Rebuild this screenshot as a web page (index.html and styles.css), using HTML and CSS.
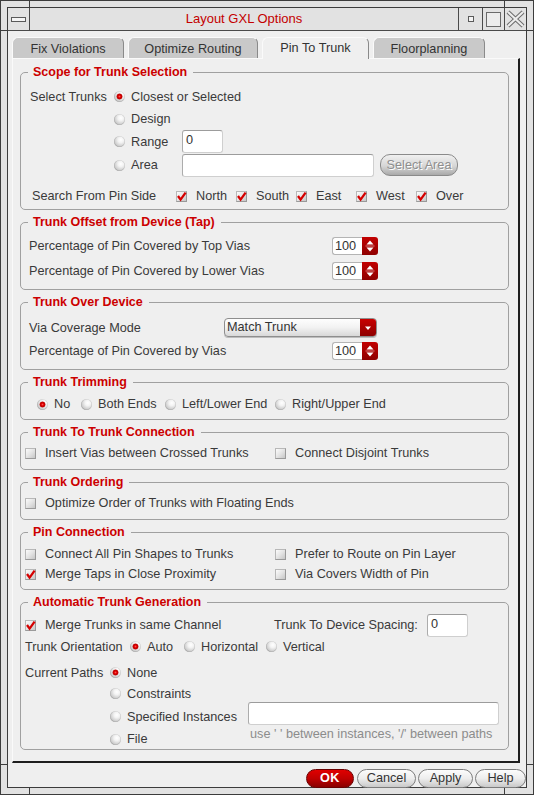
FILE: index.html
```html
<!DOCTYPE html>
<html>
<head>
<meta charset="utf-8">
<title>Layout GXL Options</title>
<link rel="stylesheet" href="styles.css">
</head>
<body>
<div class="window">
  <span class="tick tv tl"></span>
  <span class="tick tv tr"></span>
  <span class="tick tv bl"></span>
  <span class="tick tv br"></span>
  <span class="tick th lt"></span>
  <span class="tick th rt"></span>
  <span class="tick th lb"></span>
  <span class="tick th rb"></span>
  <div class="inner">
    <div class="titlebar">
      <div class="tb-btn tb-menu"><span class="menu-glyph"></span></div>
      <div class="tb-title">Layout GXL Options</div>
      <div class="tb-btn tb-min"><span class="min-glyph"></span></div>
      <div class="tb-btn tb-max"><span class="max-glyph"></span></div>
      <div class="tb-btn tb-close">
        <svg width="19" height="18" viewBox="0 0 19 18"><path d="M2 2 L17 16 M17 2 L2 16" stroke="#6c6c6c" stroke-width="4.2" fill="none"/><path d="M2 2 L17 16 M17 2 L2 16" stroke="#ececec" stroke-width="2.2" fill="none"/></svg>
      </div>
    </div>

    <div class="content">
      <div class="tabs">
        <div class="tab t-fix">Fix Violations</div>
        <div class="tab t-opt">Optimize Routing</div>
        <div class="tab t-pin active">Pin To Trunk</div>
        <div class="tab t-floor">Floorplanning</div>
      </div>

      <div class="panel">
        <fieldset class="group">
          <legend>Scope for Trunk Selection</legend>
          <div class="gbody g-scope">
            <div class="scope">
              <span class="lbl">Select Trunks</span>
              <label class="opt span3"><span class="radio on"></span>Closest or Selected</label>
              <label class="opt c2"><span class="radio"></span>Design</label>
              <label class="opt c2"><span class="radio"></span>Range</label>
              <div class="field f-range">0</div>
              <label class="opt c2"><span class="radio"></span>Area</label>
              <div class="field f-area"></div>
              <div class="pill disabled sel-area">Select Area</div>
            </div>
            <div class="sides">
              <span class="lbl side-lbl">Search From Pin Side</span>
              <label class="cbi w60"><span class="cb"><svg width="11" height="11" viewBox="0 0 11 11"><path d="M2 5 L4.6 8.6 L9.6 1.6" stroke="#d40000" stroke-width="2.3" fill="none"/></svg></span>North</label>
              <label class="cbi w60"><span class="cb"><svg width="11" height="11" viewBox="0 0 11 11"><path d="M2 5 L4.6 8.6 L9.6 1.6" stroke="#d40000" stroke-width="2.3" fill="none"/></svg></span>South</label>
              <label class="cbi w60"><span class="cb"><svg width="11" height="11" viewBox="0 0 11 11"><path d="M2 5 L4.6 8.6 L9.6 1.6" stroke="#d40000" stroke-width="2.3" fill="none"/></svg></span>East</label>
              <label class="cbi w60"><span class="cb"><svg width="11" height="11" viewBox="0 0 11 11"><path d="M2 5 L4.6 8.6 L9.6 1.6" stroke="#d40000" stroke-width="2.3" fill="none"/></svg></span>West</label>
              <label class="cbi"><span class="cb"><svg width="11" height="11" viewBox="0 0 11 11"><path d="M2 5 L4.6 8.6 L9.6 1.6" stroke="#d40000" stroke-width="2.3" fill="none"/></svg></span>Over</label>
            </div>
          </div>
        </fieldset>

        <fieldset class="group">
          <legend>Trunk Offset from Device (Tap)</legend>
          <div class="gbody g-tap">
            <div class="row r25">
              <span class="lbl w303">Percentage of Pin Covered by Top Vias</span>
              <div class="spin"><span class="spin-field">100</span><span class="spin-btn"><svg width="16" height="18" viewBox="0 0 16 18"><path d="M4.5 7.5 L8 3.5 L11.5 7.5Z" fill="#fff"/><path d="M4.5 10.5 L8 14.5 L11.5 10.5Z" fill="#fff"/><path d="M3.5 9 H12.5" stroke="#d98080" stroke-width="1"/></svg></span></div>
            </div>
            <div class="row r25">
              <span class="lbl w303">Percentage of Pin Covered by Lower Vias</span>
              <div class="spin"><span class="spin-field">100</span><span class="spin-btn"><svg width="16" height="18" viewBox="0 0 16 18"><path d="M4.5 7.5 L8 3.5 L11.5 7.5Z" fill="#fff"/><path d="M4.5 10.5 L8 14.5 L11.5 10.5Z" fill="#fff"/><path d="M3.5 9 H12.5" stroke="#d98080" stroke-width="1"/></svg></span></div>
            </div>
          </div>
        </fieldset>

        <fieldset class="group">
          <legend>Trunk Over Device</legend>
          <div class="gbody g-over">
            <div class="row r23">
              <span class="lbl w195">Via Coverage Mode</span>
              <div class="combo"><span class="combo-text">Match Trunk</span><span class="combo-btn"><svg width="16" height="18" viewBox="0 0 16 18"><path d="M5 7.5 L11 7.5 L8 11Z" fill="#fff"/></svg></span></div>
            </div>
            <div class="row r24">
              <span class="lbl w303">Percentage of Pin Covered by Vias</span>
              <div class="spin"><span class="spin-field">100</span><span class="spin-btn"><svg width="16" height="18" viewBox="0 0 16 18"><path d="M4.5 7.5 L8 3.5 L11.5 7.5Z" fill="#fff"/><path d="M4.5 10.5 L8 14.5 L11.5 10.5Z" fill="#fff"/><path d="M3.5 9 H12.5" stroke="#d98080" stroke-width="1"/></svg></span></div>
            </div>
          </div>
        </fieldset>

        <fieldset class="group">
          <legend>Trunk Trimming</legend>
          <div class="gbody g-trim">
            <div class="trim">
              <label class="opt"><span class="radio on"></span>No</label>
              <label class="opt"><span class="radio"></span>Both Ends</label>
              <label class="opt"><span class="radio"></span>Left/Lower End</label>
              <label class="opt"><span class="radio"></span>Right/Upper End</label>
            </div>
          </div>
        </fieldset>

        <fieldset class="group">
          <legend>Trunk To Trunk Connection</legend>
          <div class="gbody g-chk">
            <div class="two">
              <label class="cbi"><span class="cb"></span>Insert Vias between Crossed Trunks</label>
              <label class="cbi"><span class="cb"></span>Connect Disjoint Trunks</label>
            </div>
          </div>
        </fieldset>

        <fieldset class="group">
          <legend>Trunk Ordering</legend>
          <div class="gbody g-chk">
            <div class="two">
              <label class="cbi"><span class="cb"></span>Optimize Order of Trunks with Floating Ends</label>
            </div>
          </div>
        </fieldset>

        <fieldset class="group">
          <legend>Pin Connection</legend>
          <div class="gbody g-pin">
            <div class="two">
              <label class="cbi"><span class="cb"></span>Connect All Pin Shapes to Trunks</label>
              <label class="cbi"><span class="cb"></span>Prefer to Route on Pin Layer</label>
              <label class="cbi"><span class="cb"><svg width="11" height="11" viewBox="0 0 11 11"><path d="M2 5 L4.6 8.6 L9.6 1.6" stroke="#d40000" stroke-width="2.3" fill="none"/></svg></span>Merge Taps in Close Proximity</label>
              <label class="cbi"><span class="cb"></span>Via Covers Width of Pin</label>
            </div>
          </div>
        </fieldset>

        <fieldset class="group">
          <legend>Automatic Trunk Generation</legend>
          <div class="gbody g-auto">
            <div class="row r24">
              <label class="cbi w249"><span class="cb"><svg width="11" height="11" viewBox="0 0 11 11"><path d="M2 5 L4.6 8.6 L9.6 1.6" stroke="#d40000" stroke-width="2.3" fill="none"/></svg></span>Merge Trunks in same Channel</label>
              <span class="lbl w153">Trunk To Device Spacing:</span>
              <div class="field f-space">0</div>
            </div>
            <div class="row r19">
              <span class="lbl w105">Trunk Orientation</span>
              <label class="opt w54"><span class="radio on"></span>Auto</label>
              <label class="opt w82"><span class="radio"></span>Horizontal</label>
              <label class="opt"><span class="radio"></span>Vertical</label>
            </div>
            <div class="paths">
              <span class="lbl">Current Paths</span>
              <label class="opt c2"><span class="radio on"></span>None</label>
              <label class="opt c2"><span class="radio"></span>Constraints</label>
              <label class="opt c2"><span class="radio"></span>Specified Instances</label>
              <div class="field f-inst"></div>
              <label class="opt c2"><span class="radio"></span>File</label>
              <span class="hint">use ' ' between instances, '/' between paths</span>
            </div>
          </div>
        </fieldset>
      </div>

      <div class="buttons">
        <div class="pill ok">OK</div>
        <div class="pill b-cancel">Cancel</div>
        <div class="pill b-apply">Apply</div>
        <div class="pill b-help">Help</div>
      </div>
    </div>
  </div>
</div>
</body>
</html>
```
FILE: styles.css
```css
* { box-sizing: border-box; }
html, body { margin: 0; padding: 0; background: #e2e2e2; }
body {
  font-family: "Liberation Sans", Arial, sans-serif;
  font-size: 12.7px;
  color: #3a3a3a;
}

/* window frame */
.window {
  position: relative;
  width: 534px;
  height: 795px;
  border: 1px solid #3c3c3c;
  background: #e2e2e2;
  padding: 6px;
}
.tick { position: absolute; background: #3c3c3c; }
.tv { width: 1px; height: 7px; }
.th { width: 7px; height: 1px; }
.tl { left: 28px; top: -1px; }
.tr { left: 503px; top: -1px; }
.bl { left: 28px; bottom: -1px; }
.br { left: 503px; bottom: -1px; }
.lt { left: -1px; top: 29px; }
.rt { right: -1px; top: 29px; }
.lb { left: -1px; top: 763px; }
.rb { right: -1px; top: 763px; }

.inner {
  height: 100%;
  border: 1px solid #3c3c3c;
  display: flex;
  flex-direction: column;
  background: #efefef;
}

/* title bar */
.titlebar {
  height: 23px;
  flex: none;
  display: flex;
  border-bottom: 1px solid #4a4a4a;
  background: #e2e2e2;
}
.tb-btn { display: flex; align-items: center; justify-content: center; }
.tb-menu { width: 22px; border-right: 1px solid #4a4a4a; }
.menu-glyph { width: 15px; height: 5px; border: 1px solid #5a5a5a; background: #f4f4f4; }
.tb-title {
  flex: 1;
  text-align: center;
  line-height: 22px;
  font-size: 13px;
  color: #c40000;
}
.tb-min { width: 24px; border-left: 1px solid #4a4a4a; }
.min-glyph { width: 6px; height: 6px; border: 1px solid #5a5a5a; background: #f4f4f4; }
.tb-max { width: 22px; border-left: 1px solid #4a4a4a; }
.max-glyph { width: 15px; height: 15px; border: 1px solid #6a6a6a; background: #ececec; }
.tb-close { width: 22px; border-left: 1px solid #4a4a4a; }

/* content */
.content { flex: 1; display: flex; flex-direction: column; }

.tabs {
  display: flex;
  gap: 4px;
  margin: 6px 0 0 4px;
  height: 21px;
  position: relative;
  z-index: 1;
}
.tab {
  height: 21px;
  border: 1px solid #fafafa;
  border-right-color: #8a8a8a;
  border-bottom: none;
  border-radius: 6px 6px 0 0;
  background: #c9c9c9;
  text-align: center;
  line-height: 19px;
  padding-top: 2px;
  color: #333;
}
.tab.active {
  background: #efefef;
  height: 22px;
  padding-top: 0;
  line-height: 20px;
}
.t-fix { width: 112px; }
.t-opt { width: 130px; }
.t-pin { width: 107px; }
.t-floor { width: 112px; }

.panel {
  flex: 1;
  margin: 0 6px 0 4px;
  border-top: 1px solid #fafafa;
  border-left: 1px solid #fafafa;
  border-right: 2px solid #1e1e1e;
  border-bottom: 2px solid #1e1e1e;
  padding: 6px 9px 0 7px;
}

/* groups */
.group {
  margin: 0;
  padding: 0;
  border: 1px solid #a0a0a0;
  border-radius: 5px;
  min-width: 0;
}
.group + .group { margin-top: 5px; }
.group legend {
  margin-left: 7px;
  padding: 0 6px 0 5px;
  font-weight: bold;
  font-size: 12.5px;
  line-height: 14px;
  color: #cc0000;
}

.lbl { white-space: nowrap; }
.row { display: flex; align-items: center; }
.r19 { height: 19px; }
.r23 { height: 23px; }
.r24 { height: 24px; }
.r25 { height: 25px; }
.w54 { width: 54px; }
.w60 { width: 60px; }
.w82 { width: 82px; }
.w105 { width: 105px; }
.w153 { width: 153px; }
.w195 { width: 195px; }
.w249 { width: 249px; }
.w303 { width: 303px; }

/* radio / checkbox */
.opt { display: flex; align-items: center; gap: 6px; white-space: nowrap; }
.radio {
  flex: none;
  width: 11px;
  height: 11px;
  border-radius: 50%;
  background: radial-gradient(circle at 62% 36%, #ffffff 0%, #f3f3f3 28%, #cfcfcf 62%, #959595 100%);
  box-shadow: inset 0 0 0 0.6px rgba(0,0,0,0.12);
}
.radio.on {
  background:
    radial-gradient(circle at 50% 50%, #ff5050 0, #dd0000 1.4px, #b80000 2.6px, rgba(184,0,0,0) 3.3px),
    radial-gradient(circle at 62% 36%, #ffffff 0%, #f3f3f3 28%, #cfcfcf 62%, #959595 100%);
}
.cbi { display: flex; align-items: center; gap: 9px; white-space: nowrap; }
.cb {
  flex: none;
  width: 11px;
  height: 11px;
  border: 1px solid #b8b8b8;
  border-right-color: #9a9a9a;
  border-bottom-color: #9a9a9a;
  background: linear-gradient(135deg, #fcfcfc 0%, #e4e4e4 50%, #c6c6c6 100%);
  position: relative;
}
.cb svg { position: absolute; left: -1px; top: -1px; }

/* fields */
.field {
  background: #fff;
  border: 1px solid #cfcfcf;
  border-top-color: #9c9c9c;
  border-left-color: #acacac;
  border-radius: 3px;
  height: 23px;
  padding: 1px 0 0 3px;
  line-height: 17px;
  color: #333;
}
.f-range { width: 41px; }
.f-area { width: 192px; }
.f-space { width: 41px; }
.f-inst { width: 251px; align-self: start; margin-top: -2px; }

.spin { display: flex; height: 18px; }
.spin-field {
  width: 30px;
  height: 18px;
  background: #fff;
  border: 1px solid #b4b4b4;
  border-right: none;
  border-radius: 3px 0 0 3px;
  padding-left: 2px;
  line-height: 16px;
  color: #333;
}
.spin-btn {
  width: 16px;
  height: 18px;
  border-radius: 0 3px 3px 0;
  background: linear-gradient(#c20000, #8e0000);
  display: flex;
}

.combo {
  width: 153px;
  height: 19px;
  display: flex;
  border: 1px solid #8e8e8e;
  border-radius: 4px;
  background: linear-gradient(#fefefe 0%, #f2f2f2 50%, #d8d8d8 100%);
  overflow: hidden;
  box-shadow: 0 1px 0 #bdbdbd;
}
.combo-text { flex: 1; padding-left: 2px; line-height: 16px; color: #333; }
.combo-btn {
  width: 16px;
  background: linear-gradient(#c80000, #8e0000);
  display: flex;
}

/* pills / buttons */
.pill {
  height: 19px;
  border: 1px solid #7c7c7c;
  border-radius: 10px;
  background: linear-gradient(#fcfcfc 0%, #ededed 50%, #c9c9c9 100%);
  text-align: center;
  line-height: 17px;
  color: #333;
}
.pill.disabled {
  color: #8e8e8e;
  text-shadow: 1px 1px 0 #ffffff;
  background: linear-gradient(#f0f0f0 0%, #d6d6d6 55%, #a9a9a9 100%);
  border-color: #8a8a8a;
}
.sel-area { width: 78px; height: 22px; line-height: 20px; margin-left: 6px; }

/* box 1 */
.g-scope { padding: 6px 0 3px 9px; }
.scope {
  display: grid;
  grid-template-columns: 84px 68px 192px auto;
  grid-template-rows: 23px 22px 23px 24px;
  align-items: center;
}
.span3 { grid-column: 2 / span 3; }
.c2 { grid-column: 2; }
.sides { display: flex; align-items: center; height: 20px; margin-top: 9px; }
.side-lbl { width: 146px; padding-left: 2px; }

.g-tap { padding: 4px 0 6px 8px; }
.g-over { padding: 7px 0 6px 8px; }

.g-trim { padding: 5px 0 5px 16px; }
.trim {
  display: grid;
  grid-template-columns: 44px 84px 110px auto;
  height: 20px;
  align-items: center;
}

.g-chk { padding: 4px 0 6px 4px; }
.g-pin { padding: 5px 0 5px 4px; }
.two {
  display: grid;
  grid-template-columns: 250px auto;
  grid-auto-rows: 20px;
  align-items: center;
}

.g-auto { padding: 4px 0 0 4px; }
.paths {
  display: grid;
  grid-template-columns: 85px 138px 251px;
  grid-template-rows: 21px 21px 25px 20px;
  align-items: center;
  margin-top: 6px;
}
.hint {
  align-self: start;
  margin-top: -1px;
  padding-left: 2px;
  line-height: 13px;
  color: #8c8c8c;
  white-space: nowrap;
}

/* bottom buttons */
.buttons {
  height: 24px;
  flex: none;
  display: flex;
  justify-content: flex-end;
  align-items: flex-start;
  gap: 2px;
  padding-top: 6px;
}
.ok {
  width: 48px;
  border-color: #6a0000;
  background: linear-gradient(#e00000 0%, #c00000 50%, #8a0000 100%);
  color: #fff;
  font-weight: bold;
  letter-spacing: 0.5px;
  margin-right: 1px;
}
.b-cancel { width: 59px; }
.b-apply { width: 55px; }
.b-help { width: 51px; }
```
